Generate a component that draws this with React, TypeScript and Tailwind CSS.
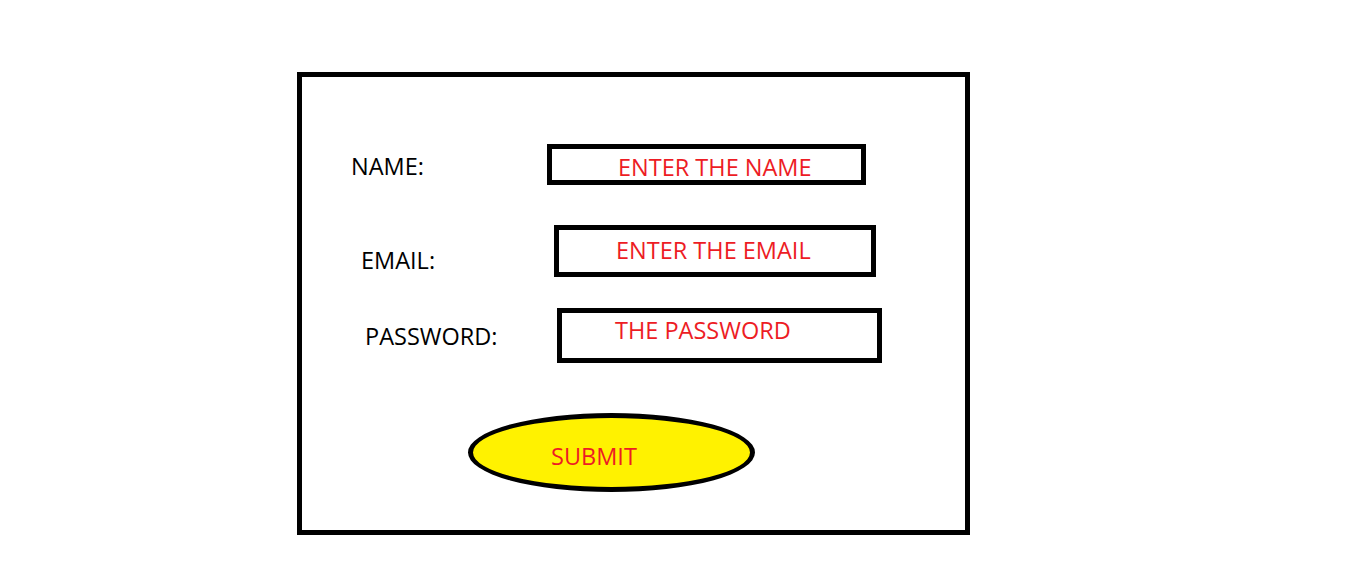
import React from "react";

export default function App() {
  const font = { fontFamily: '"Open Sans", "Noto Sans", sans-serif' };
  return (
    <div className="w-[1360px] h-[570px] bg-white overflow-hidden" style={font}>
      <div className="pt-[72px] pl-[297px]">
        <div className="w-[673px] h-[463px] border-[5px] border-black bg-white flex flex-col text-[23.5px] leading-[23px]">
          {/* NAME row */}
          <div className="flex mt-[67px]">
            <div className="ml-[49px] mt-[11px] w-[196px] text-black">NAME:</div>
            <div className="w-[319px] h-[41px] border-[5px] border-black pl-[66px] pt-[7px] text-[#ed1c24] whitespace-nowrap">
              ENTER THE NAME
            </div>
          </div>
          {/* EMAIL row */}
          <div className="flex mt-[40px]">
            <div className="ml-[59px] mt-[24px] w-[193px] text-black">EMAIL:</div>
            <div className="w-[322px] h-[52px] border-[5px] border-black pl-[57px] pt-[9px] text-[#ed1c24] whitespace-nowrap">
              ENTER THE EMAIL
            </div>
          </div>
          {/* PASSWORD row */}
          <div className="flex mt-[31px]">
            <div className="ml-[63px] mt-[17px] w-[192px] text-black">PASSWORD:</div>
            <div className="w-[325px] h-[55px] border-[5px] border-black pl-[53px] pt-[6px] text-[#ed1c24] whitespace-nowrap">
              THE PASSWORD
            </div>
          </div>
          {/* SUBMIT */}
          <div className="flex mt-[50px]">
            <button
              type="button"
              className="ml-[166px] w-[287px] h-[79px] rounded-[50%] border-[5px] border-black bg-[#fff200] text-[#ed1c24] pl-[78px] pt-[27px] text-left leading-[23px] text-[23.5px] cursor-pointer flex items-start"
            >
              SUBMIT
            </button>
          </div>
        </div>
      </div>
    </div>
  );
}
